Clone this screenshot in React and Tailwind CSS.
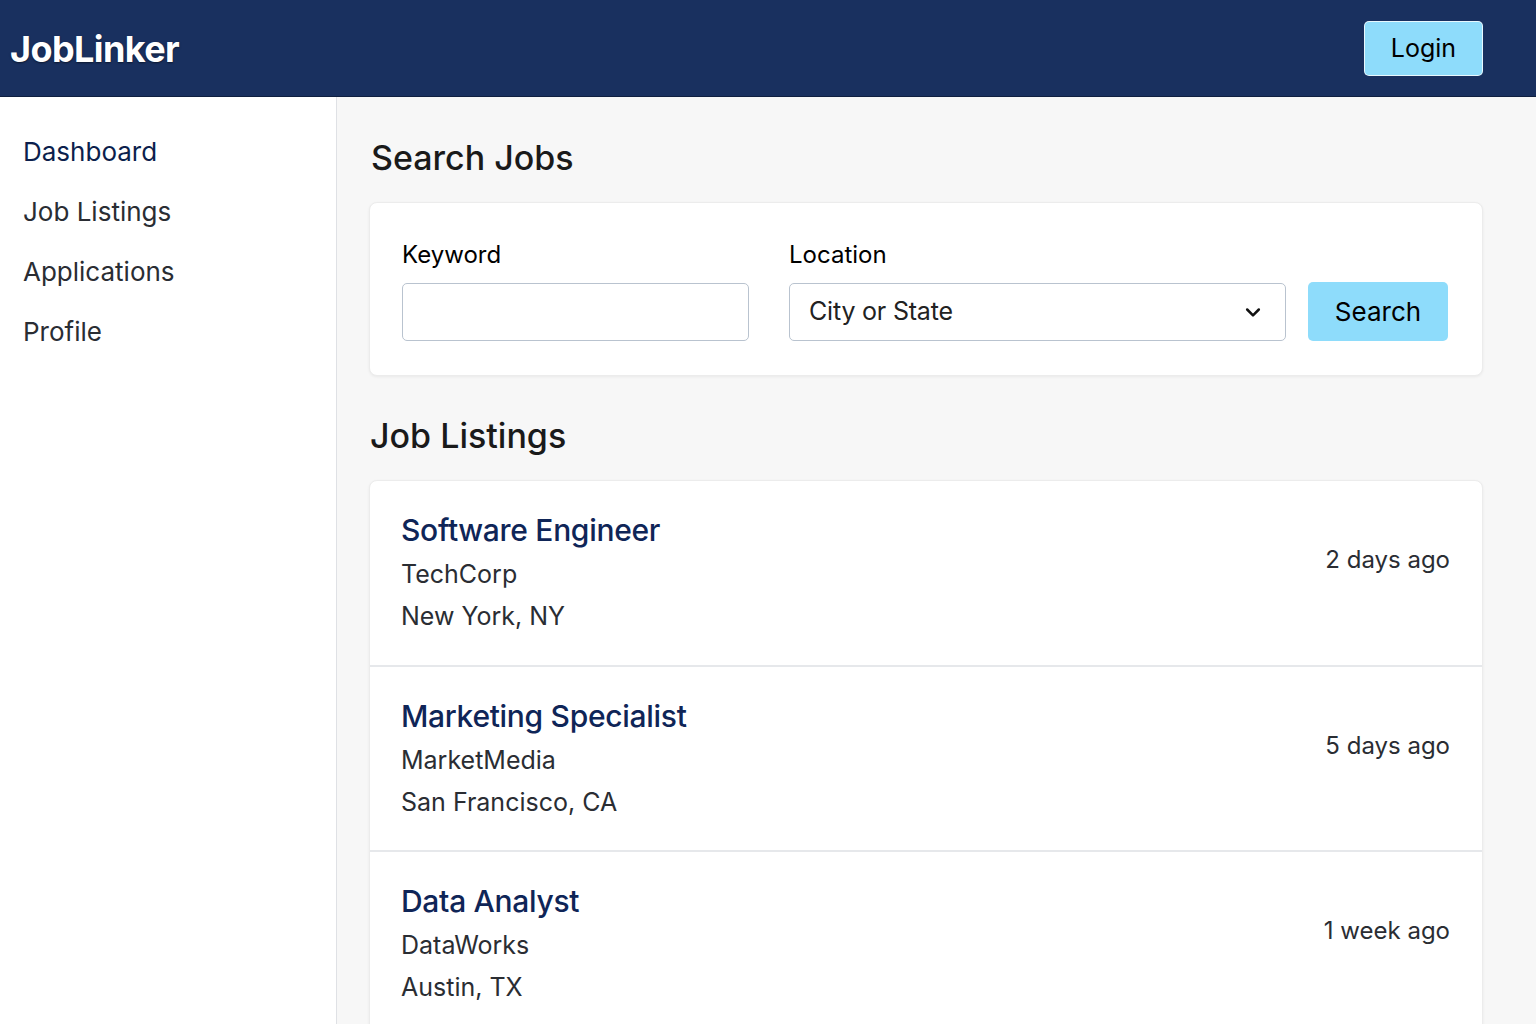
import React, { useState } from 'react'

const jobs = [
  { id: 1, title: 'Software Engineer', company: 'TechCorp', location: 'New York, NY', posted: '2 days ago' },
  { id: 2, title: 'Marketing Specialist', company: 'MarketMedia', location: 'San Francisco, CA', posted: '5 days ago' },
  { id: 3, title: 'Data Analyst', company: 'DataWorks', location: 'Austin, TX', posted: '1 week ago' },
]

const navItems = ['Dashboard', 'Job Listings', 'Applications', 'Profile']

const App = () => {
  const [active, setActive] = useState('Dashboard')
  const [keyword, setKeyword] = useState('')

  return (
    <div className="h-screen overflow-hidden flex flex-col bg-[#f7f7f7] text-[#1d1d1f]" style={{ fontFamily: 'Inter, "Liberation Sans", sans-serif' }}>
      <header className="h-[97px] shrink-0 bg-[#19305f] flex items-center justify-between pl-[10px] pr-[53px] border-b border-[#0f1f40]">
        <div className="text-white text-[36px] font-bold tracking-[-0.6px] [text-shadow:0_1px_2px_rgba(0,0,0,0.5)] mt-[2px]">JobLinker</div>
        <button className="h-[55px] w-[119px] rounded-[5px] bg-[#8edcfb] border border-white/80 text-[25px] text-black pt-[2px]">Login</button>
      </header>

      <div className="flex flex-1 min-h-0">
        <aside className="w-[337px] shrink-0 bg-white border-r border-[#dfe1e5] pt-[40px] pl-[23px]">
          <nav className="flex flex-col gap-[30px]">
            {navItems.map(item => (
              <button
                key={item}
                onClick={() => setActive(item)}
                className={`text-left text-[26px] leading-[30px] ${active === item ? 'text-[#0c1f4d]' : 'text-[#2a2d33]'}`}
              >
                {item}
              </button>
            ))}
          </nav>
        </aside>

        <main className="flex-1 pl-[32px] pr-[53px] pt-[39px]">
          <h1 className="text-[34px] leading-[44px] font-medium text-[#1a1a1a] ml-[2px]">Search Jobs</h1>

          <section className="mt-[22px] bg-white rounded-[8px] border border-[#ececec] shadow-[0_1px_3px_rgba(0,0,0,0.06)] pl-[32px] pr-[34px] pt-[38px] pb-[34px]">
            <div className="flex items-end gap-[22px]">
              <div className="w-[347px] mr-[18px]">
                <label className="block text-[24px] leading-[28px] text-black mb-[14px]">Keyword</label>
                <input
                  value={keyword}
                  onChange={e => setKeyword(e.target.value)}
                  className="w-full h-[58px] rounded-[5px] border border-[#b9c3cf] px-4 text-[24px] outline-none"
                />
              </div>
              <div className="flex-1">
                <label className="block text-[24px] leading-[28px] text-black mb-[14px]">Location</label>
                <div className="h-[58px] rounded-[5px] border border-[#b9c3cf] flex items-center justify-between pl-[19px] pr-[22px]">
                  <span className="text-[25px] text-[#222] tracking-[-0.2px]">City or State</span>
                  <svg width="20" height="20" viewBox="0 0 24 24" fill="none" stroke="#111" strokeWidth="3" strokeLinecap="round" strokeLinejoin="round">
                    <path d="M5 9l7 7 7-7" />
                  </svg>
                </div>
              </div>
              <button className="h-[59px] w-[140px] rounded-[5px] bg-[#8edcfb] text-[26px] text-black">Search</button>
            </div>
          </section>

          <h2 className="mt-[38px] ml-[1px] text-[34px] leading-[44px] font-medium text-[#1a1a1a]">Job Listings</h2>

          <section className="mt-[22px] bg-white rounded-t-[8px] border border-[#ececec] shadow-[0_1px_3px_rgba(0,0,0,0.06)]">
            {jobs.map((job, i) => (
              <div key={job.id} className={`flex justify-between pl-[31px] pr-[32px] ${i > 0 ? 'h-[185px] pt-[31px] border-t-2 border-[#e6e8eb]' : 'h-[184px] pt-[31px]'}`}>
                <div>
                  <div className="text-[30px] leading-[36px] font-medium text-[#0f2557] tracking-[-0.3px]">{job.title}</div>
                  <div className="mt-[11px] text-[25px] leading-[30px] text-[#2a2d33]">{job.company}</div>
                  <div className="mt-[12px] text-[25px] leading-[30px] text-[#2a2d33]">{job.location}</div>
                </div>
                <div className="pt-[33px] text-[24px] leading-[30px] text-[#2a2d33]">{job.posted}</div>
              </div>
            ))}
          </section>
        </main>
      </div>
    </div>
  )
}

export default App
